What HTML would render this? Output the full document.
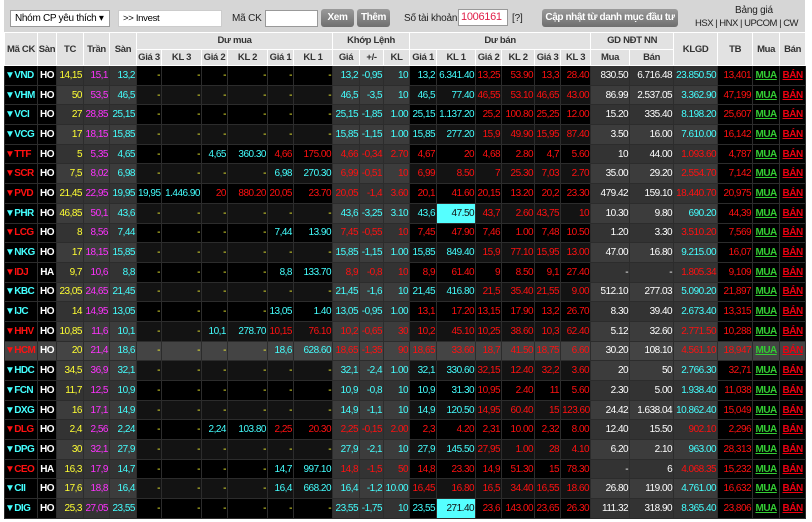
<!DOCTYPE html>
<html><head><meta charset="utf-8"><style>
*{box-sizing:border-box;margin:0;padding:0}
body{width:812px;height:522px;background:#fff;font-family:"Liberation Sans","DejaVu Sans",sans-serif;position:relative;overflow:hidden}
#top{position:absolute;left:4px;top:0;width:801px;height:32px;background:#d6d6d6}
.tx{position:absolute;font-size:10px;color:#222;white-space:nowrap;letter-spacing:-0.2px}
.box{position:absolute;background:#fff;border:1px solid #999;font-size:9.5px;padding:2px 4px;height:17px;white-space:nowrap;overflow:hidden;letter-spacing:-0.3px}
.btn{position:absolute;background:linear-gradient(#9a9a9a,#6e6e6e);color:#fff;font-weight:bold;font-size:10px;border-radius:3px;text-align:center;line-height:18px;height:18px;white-space:nowrap;letter-spacing:-0.4px;overflow:hidden}
table{position:absolute;left:4px;top:32px;border-collapse:collapse;table-layout:fixed;width:801px;font-size:10px;letter-spacing:-0.5px}
th{background:#e2e2e2;color:#333;font-size:9.5px;font-weight:bold;border:1px solid #fff;height:16.5px;text-align:center;white-space:nowrap;overflow:hidden;padding:0;letter-spacing:-0.3px}
td{border:1px solid #2c2c2c;height:19.7px;text-align:right;padding:0 1px;white-space:nowrap;overflow:hidden}
.c{color:#4ff}.r{color:#f11}.y{color:#ff3}.m{color:#f3f}.w{color:#fff}
.sym{text-align:left;font-weight:bold;padding:0;letter-spacing:-0.6px}
.ex{text-align:center;color:#fff;font-weight:bold}
.lk{text-align:center;font-weight:bold;text-decoration:underline}
.hl{background:#5ff!important;color:#111!important}
</style></head><body>
<div id="top"></div>
<div class="box" style="left:10px;top:10px;width:100px;font-size:10px;padding:2px 4px">Nhóm CP yêu thích ▾</div>
<div class="box" style="left:118px;top:10px;width:104px;border-color:#ccc">&gt;&gt; Invest</div>
<div class="tx" style="left:232px;top:13px">Mã CK</div>
<div class="box" style="left:265px;top:10px;width:53px"></div>
<div class="btn" style="left:321px;top:9px;width:33px">Xem</div>
<div class="btn" style="left:357px;top:9px;width:33px">Thêm</div>
<div class="tx" style="left:404px;top:13px">Số tài khoản</div>
<div class="box" style="left:458px;top:9px;width:50px;color:#e0204a;font-size:11px;padding:1px 2px">1006161</div>
<div class="tx" style="left:512px;top:13px">[?]</div>
<div class="btn" style="left:542px;top:9px;width:136px">Cập nhật từ danh mục đầu tư</div>
<div class="tx" style="left:735px;top:5px">Bảng giá</div>
<div class="tx" style="left:695px;top:18px;letter-spacing:-0.5px;font-size:9.5px">HSX | HNX | UPCOM | CW</div>
<table id="t">
<colgroup><col style="width:33px"><col style="width:19px"><col style="width:27px"><col style="width:26px"><col style="width:27px"><col style="width:25px"><col style="width:40px"><col style="width:26px"><col style="width:40px"><col style="width:26px"><col style="width:39px"><col style="width:27px"><col style="width:24px"><col style="width:26px"><col style="width:27px"><col style="width:39px"><col style="width:26px"><col style="width:33px"><col style="width:26px"><col style="width:30px"><col style="width:39px"><col style="width:44px"><col style="width:44px"><col style="width:35px"><col style="width:27px"><col style="width:26px"></colgroup>
<tr><th rowspan="2">Mã CK</th><th rowspan="2">Sàn</th><th rowspan="2">TC</th><th rowspan="2">Trần</th><th rowspan="2">Sàn</th><th colspan="6">Dư mua</th><th colspan="3">Khớp Lệnh</th><th colspan="6">Dư bán</th><th colspan="2">GD NĐT NN</th><th rowspan="2">KLGD</th><th rowspan="2">TB</th><th rowspan="2">Mua</th><th rowspan="2">Bán</th></tr>
<tr><th>Giá 3</th><th>KL 3</th><th>Giá 2</th><th>KL 2</th><th>Giá 1</th><th>KL 1</th><th>Giá</th><th>+/-</th><th>KL</th><th>Giá 1</th><th>KL 1</th><th>Giá 2</th><th>KL 2</th><th>Giá 3</th><th>KL 3</th><th>Mua</th><th>Bán</th></tr>
</table>
<script>
var D=[
["VND","c","HO","14,15","15,1","13,2",["-","-","y"],["-","-","y"],["-","-","y"],["13,2","-0,95","10","c"],["13,2","6.341.40","c"],["13,25","53.90","r"],["13,3","28.40","r"],"830.50","6.716.48",["23.850.50","c"],"13,401"],
["VHM","c","HO","50","53,5","46,5",["-","-","y"],["-","-","y"],["-","-","y"],["46,5","-3,5","10","c"],["46,5","77.40","c"],["46,55","53.10","r"],["46,65","43.00","r"],"86.99","2.537.05",["3.362.90","c"],"47,199"],
["VCI","c","HO","27","28,85","25,15",["-","-","y"],["-","-","y"],["-","-","y"],["25,15","-1,85","1.00","c"],["25,15","1.137.20","c"],["25,2","100.80","r"],["25,25","12.00","r"],"15.20","335.40",["8.198.20","c"],"25,607"],
["VCG","c","HO","17","18,15","15,85",["-","-","y"],["-","-","y"],["-","-","y"],["15,85","-1,15","1.00","c"],["15,85","277.20","c"],["15,9","49.90","r"],["15,95","87.40","r"],"3.50","16.00",["7.610.00","c"],"16,142"],
["TTF","r","HO","5","5,35","4,65",["-","-","y"],["4,65","360.30","c"],["4,66","175.00","r"],["4,66","-0,34","2.70","r"],["4,67","20","r"],["4,68","2.80","r"],["4,7","5.60","r"],"10","44.00",["1.093.60","r"],"4,787"],
["SCR","r","HO","7,5","8,02","6,98",["-","-","y"],["-","-","y"],["6,98","270.30","c"],["6,99","-0,51","10","r"],["6,99","8.50","r"],["7","25.30","r"],["7,03","2.70","r"],"35.00","29.20",["2.554.70","r"],"7,142"],
["PVD","r","HO","21,45","22,95","19,95",["19,95","1.446.90","c"],["20","880.20","r"],["20,05","23.70","r"],["20,05","-1,4","3.60","r"],["20,1","41.60","r"],["20,15","13.20","r"],["20,2","23.30","r"],"479.42","159.10",["18.440.70","r"],"20,975"],
["PHR","c","HO","46,85","50,1","43,6",["-","-","y"],["-","-","y"],["-","-","y"],["43,6","-3,25","3.10","c"],["43,6","47.50","c",1],["43,7","2.60","r"],["43,75","10","r"],"10.30","9.80",["690.20","c"],"44,39"],
["LCG","r","HO","8","8,56","7,44",["-","-","y"],["-","-","y"],["7,44","13.90","c"],["7,45","-0,55","10","r"],["7,45","47.90","r"],["7,46","1.00","r"],["7,48","10.50","r"],"1.20","3.30",["3.510.20","r"],"7,569"],
["NKG","c","HO","17","18,15","15,85",["-","-","y"],["-","-","y"],["-","-","y"],["15,85","-1,15","1.00","c"],["15,85","849.40","c"],["15,9","77.10","r"],["15,95","13.00","r"],"47.00","16.80",["9.215.00","c"],"16,07"],
["IDJ","r","HA","9,7","10,6","8,8",["-","-","y"],["-","-","y"],["8,8","133.70","c"],["8,9","-0,8","10","r"],["8,9","61.40","r"],["9","8.50","r"],["9,1","27.40","r"],"-","-",["1.805.34","r"],"9,109"],
["KBC","c","HO","23,05","24,65","21,45",["-","-","y"],["-","-","y"],["-","-","y"],["21,45","-1,6","10","c"],["21,45","416.80","c"],["21,5","35.40","r"],["21,55","9.00","r"],"512.10","277.03",["5.090.20","c"],"21,897"],
["IJC","c","HO","14","14,95","13,05",["-","-","y"],["-","-","y"],["13,05","1.40","c"],["13,05","-0,95","1.00","c"],["13,1","17.20","r"],["13,15","17.90","r"],["13,2","26.70","r"],"8.30","39.40",["2.673.40","c"],"13,315"],
["HHV","r","HO","10,85","11,6","10,1",["-","-","y"],["10,1","278.70","c"],["10,15","76.10","r"],["10,2","-0,65","30","r"],["10,2","45.10","r"],["10,25","38.60","r"],["10,3","62.40","r"],"5.12","32.60",["2.771.50","r"],"10,288"],
["HCM","r","HO","20","21,4","18,6",["-","-","y"],["-","-","y"],["18,6","628.60","c"],["18,65","-1,35","90","r"],["18,65","33.60","r"],["18,7","41.50","r"],["18,75","6.60","r"],"30.20","108.10",["4.561.10","r"],"18,947",1],
["HDC","c","HO","34,5","36,9","32,1",["-","-","y"],["-","-","y"],["-","-","y"],["32,1","-2,4","1.00","c"],["32,1","330.60","c"],["32,15","12.40","r"],["32,2","3.60","r"],"20","50",["2.766.30","c"],"32,71"],
["FCN","c","HO","11,7","12,5","10,9",["-","-","y"],["-","-","y"],["-","-","y"],["10,9","-0,8","10","c"],["10,9","31.30","c"],["10,95","2.40","r"],["11","5.60","r"],"2.30","5.00",["1.938.40","c"],"11,038"],
["DXG","c","HO","16","17,1","14,9",["-","-","y"],["-","-","y"],["-","-","y"],["14,9","-1,1","10","c"],["14,9","120.50","c"],["14,95","60.40","r"],["15","123.60","r"],"24.42","1.638.04",["10.862.40","c"],"15,049"],
["DLG","r","HO","2,4","2,56","2,24",["-","-","y"],["2,24","103.80","c"],["2,25","20.30","r"],["2,25","-0,15","2.00","r"],["2,3","4.20","r"],["2,31","10.00","r"],["2,32","8.00","r"],"12.40","15.50",["902.10","r"],"2,296"],
["DPG","c","HO","30","32,1","27,9",["-","-","y"],["-","-","y"],["-","-","y"],["27,9","-2,1","10","c"],["27,9","145.50","c"],["27,95","1.00","r"],["28","4.10","r"],"6.20","2.10",["963.00","c"],"28,313"],
["CEO","r","HA","16,3","17,9","14,7",["-","-","y"],["-","-","y"],["14,7","997.10","c"],["14,8","-1,5","50","r"],["14,8","23.30","r"],["14,9","51.30","r"],["15","78.30","r"],"-","6",["4.068.35","r"],"15,232"],
["CII","c","HO","17,6","18,8","16,4",["-","-","y"],["-","-","y"],["16,4","668.20","c"],["16,4","-1,2","10.00","c"],["16,45","16.80","r"],["16,5","34.40","r"],["16,55","18.60","r"],"26.80","119.00",["4.761.00","c"],"16,632"],
["DIG","c","HO","25,3","27,05","23,55",["-","-","y"],["-","-","y"],["-","-","y"],["23,55","-1,75","10","c"],["23,55","271.40","c",1],["23,6","143.00","r"],["23,65","26.30","r"],"111.32","318.90",["8.365.40","c"],"23,806"]
];
var t=document.getElementById('t'),h='';
D.forEach(function(d,i){
 var hl=d[17],k=i%2?'#131313':'#000',g=i%2?'#3c3c3c':'#333';
 if(hl){k='#444';g='#444';}
 function td(txt,cl,bg){return '<td class="'+cl+'" style="background:'+bg+'">'+txt+'</td>';}
 var s='<tr>';
 s+='<td class="sym '+d[1]+'" style="background:'+(hl?'#444':'#000')+'">▼'+d[0]+'</td>';
 s+='<td class="ex" style="background:'+(hl?'#444':'#000')+'">'+d[2]+'</td>';
 s+=td(d[3],'y',g)+td(d[4],'m',g)+td(d[5],'c',g);
 [6,7,8].forEach(function(j){var p=d[j];s+=td(p[0],p[2],k)+td(p[1],p[2],k);});
 var m=d[9];s+=td(m[0],m[3],g)+td(m[1],m[3],g)+td(m[2],m[3],g);
 [10,11,12].forEach(function(j){var p=d[j];s+=td(p[0],p[2],k)+td(p[1],p[2]+(p[3]?' hl':''),k);});
 s+=td(d[13],'w',g)+td(d[14],'w',g)+td(d[15][0],d[15][1],g)+td(d[16],'r',hl?'#444':'#000');
 s+='<td class="lk" style="background:'+(hl?'#444':'#000')+';color:#3c3">MUA</td>';
 s+='<td class="lk" style="background:'+(hl?'#444':'#000')+';color:#e01">BÁN</td></tr>';
 h+=s;
});
t.insertAdjacentHTML('beforeend',h);
</script>
</body></html>
